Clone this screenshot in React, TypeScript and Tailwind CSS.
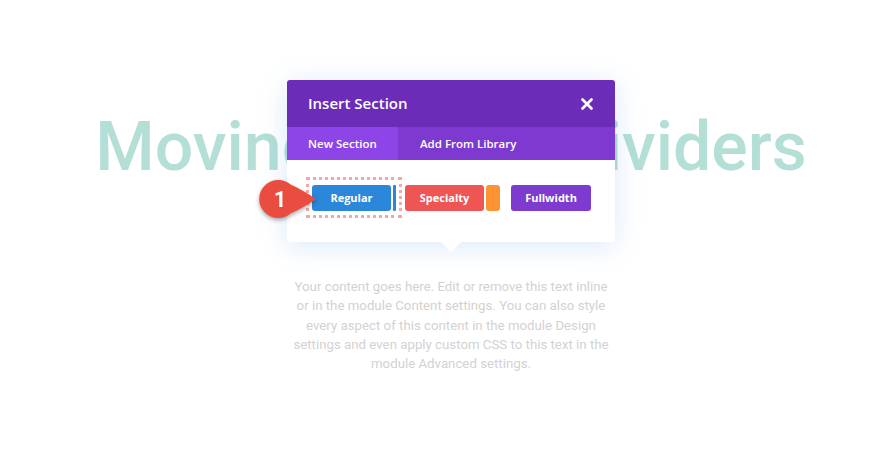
import React from 'react';

const Badge = () => (
  <svg width="64" height="46" viewBox="0 0 64 46" className="absolute left-[257px] top-[176px] drop-shadow-[0_2px_2px_rgba(0,0,0,0.35)]">
    <path
      d="M59 23 Q44 13 33.5 8.5 A19 19 0 1 0 33.5 37.5 Q44 33 59 23 Z"
      fill="#ea4c3f"
    />
    <text x="23" y="31" textAnchor="middle" fill="#fff" fontSize="22" fontWeight="700" fontFamily="Roboto, Arial, sans-serif">
      1
    </text>
  </svg>
);

export default function App() {
  return (
    <div className="relative w-[880px] h-[463px] overflow-hidden bg-white flex flex-col items-center pl-[22px] font-['Roboto',sans-serif]">
      <h1 className="mt-[112px] text-[68px] leading-[70px] font-medium tracking-[0px] [word-spacing:8px] text-[#b4dfd6] whitespace-nowrap">
        Moving Shape Dividers
      </h1>
      <p className="mt-[95px] w-[326px] text-center text-[13.25px] leading-[19.3px] text-[#d2d2d2]">
        Your content goes here. Edit or remove this text inline or in the module Content settings. You can also style every aspect of this content in the module Design settings and even apply custom CSS to this text in the module Advanced settings.
      </p>

      {/* Insert Section modal */}
      <div className="absolute left-[287px] top-[80px] w-[328px] rounded-[3px] bg-white shadow-[0_4px_28px_rgba(43,135,218,0.18)] font-['Open_Sans',sans-serif]">
        <div className="flex h-[47px] items-center justify-between rounded-t-[3px] bg-[#6b2db8] pl-[21px] pr-[22px]">
          <span className="text-[15px] font-semibold text-white">Insert Section</span>
          <svg width="12" height="12" viewBox="0 0 12 12" className="mt-[1px]">
            <path d="M1.5 1.5 L10.5 10.5 M10.5 1.5 L1.5 10.5" stroke="#fff" strokeWidth="2.6" strokeLinecap="round" />
          </svg>
        </div>
        <div className="flex h-[33px] bg-[#7d39d0] text-[11.5px] font-semibold text-white">
          <div className="flex w-[111px] items-center bg-[#8e45e8] pl-[21px]">New Section</div>
          <div className="flex items-center pl-[22px]">Add From Library</div>
        </div>
        <div className="flex items-center pl-[25px] pt-[25px] pb-[31px] text-[11px] font-bold text-white">
          <div className="flex h-[26px] w-[79px] items-center justify-center rounded-[3px] bg-[#2b87da]">Regular</div>
          <div className="ml-[2px] h-[26px] w-[3px] rounded-[1px] bg-[#2b87da]" />
          <div className="ml-[9px] flex h-[26px] w-[79px] items-center justify-center rounded-[3px] bg-[#ef5555]">Specialty</div>
          <div className="ml-[2px] h-[26px] w-[14px] rounded-[3px] bg-[#ff9232]" />
          <div className="ml-[11px] flex h-[26px] w-[80px] items-center justify-center rounded-[3px] bg-[#7e3bd0]">Fullwidth</div>
        </div>
        <div className="absolute left-1/2 -bottom-[10px] -translate-x-1/2 h-0 w-0 border-x-[10px] border-t-[10px] border-x-transparent border-t-white" />
        <div className="absolute left-[19px] top-[97px] h-[41px] w-[96px] border-[3px] border-dotted border-[#f5a7a7]" />
      </div>

      <Badge />
    </div>
  );
}
